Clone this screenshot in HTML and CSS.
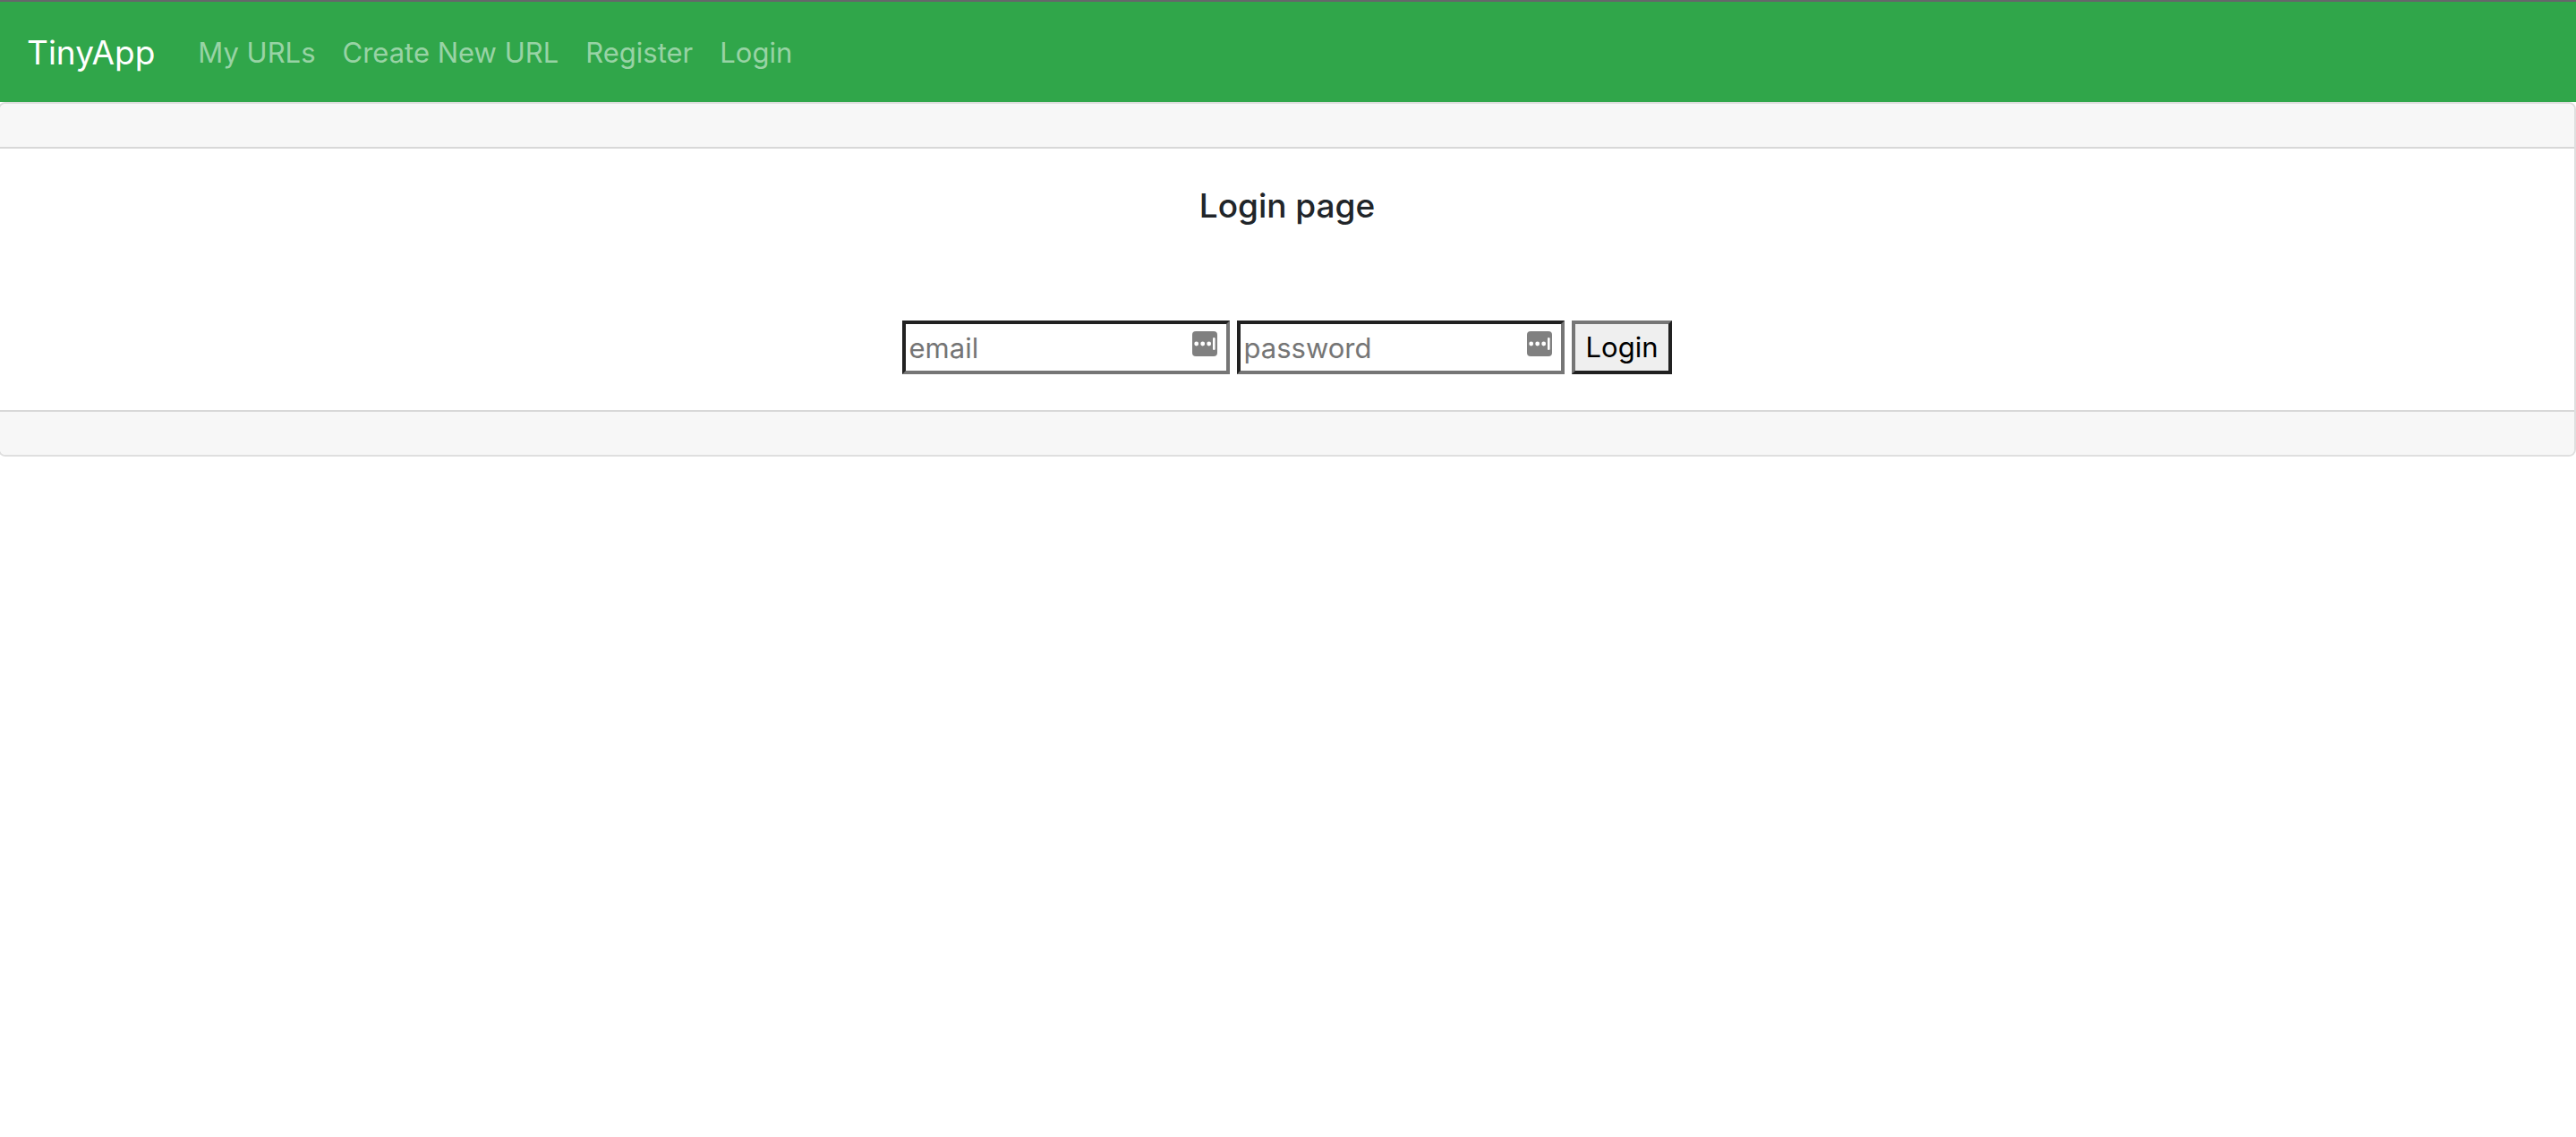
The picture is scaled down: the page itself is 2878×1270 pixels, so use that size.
FILE: index.html
```html
<!DOCTYPE html>
<html lang="en">
<head>
<meta charset="utf-8">
<meta name="viewport" content="width=device-width, initial-scale=1">
<title>TinyApp</title>
<link rel="stylesheet" href="styles.css">
</head>
<body>
<nav class="navbar">
  <a class="brand" href="#">TinyApp</a>
  <div class="nav-links">
    <a class="nav-link" href="#">My URLs</a>
    <a class="nav-link" href="#">Create New URL</a>
    <a class="nav-link" href="#">Register</a>
    <a class="nav-link" href="#">Login</a>
  </div>
</nav>
<main class="card">
  <div class="card-header"></div>
  <div class="card-body">
    <h1 class="card-title">Login page</h1>
    <form class="login-form">
      <div class="field">
        <input class="field-input" type="email" name="email" placeholder="email" aria-label="email">
        <svg class="field-icon" viewBox="0 0 28 28" aria-hidden="true">
          <rect width="28" height="28" rx="4" fill="#808080"/>
          <g fill="#fff"><circle cx="4.7" cy="14" r="2.4"/><circle cx="11.7" cy="14" r="2.4"/><circle cx="18.7" cy="14" r="2.4"/><rect x="23" y="7" width="2.6" height="14" rx="1.3"/></g>
        </svg>
      </div>
      <div class="field">
        <input class="field-input" type="password" name="password" placeholder="password" aria-label="password">
        <svg class="field-icon" viewBox="0 0 28 28" aria-hidden="true">
          <rect width="28" height="28" rx="4" fill="#808080"/>
          <g fill="#fff"><circle cx="4.7" cy="14" r="2.4"/><circle cx="11.7" cy="14" r="2.4"/><circle cx="18.7" cy="14" r="2.4"/><rect x="23" y="7" width="2.6" height="14" rx="1.3"/></g>
        </svg>
      </div>
      <button class="login-button" type="submit">Login</button>
    </form>
  </div>
  <div class="card-footer"></div>
</main>
</body>
</html>
```
FILE: styles.css
```css
* { box-sizing: border-box; }
body {
  margin: 0;
  background: #fff;
  color: #212529;
  font-family: Inter, "Liberation Sans", sans-serif;
  font-size: 31px;
  line-height: 48px;
}
.navbar {
  display: flex;
  align-items: center;
  gap: 48px;
  padding: 25px 30px 23px;
  border-top: 2px solid #66666b;
  background: #30a64a;
}
.brand {
  color: #fff;
  font-size: 37px;
  line-height: 64px;
  text-decoration: none;
}
.nav-links { display: flex; gap: 30px; }
.nav-link { color: #98d3a5; text-decoration: none; }
.card {
  margin-left: -2px;
  border: 2px solid #dfdfdf;
  border-radius: 8px;
  overflow: hidden;
}
.card-header, .card-footer { height: 50px; background: #f7f7f7; }
.card-header { border-bottom: 2px solid #d8d8d8; }
.card-footer { border-top: 2px solid #d8d8d8; }
.card-body { padding: 40px; text-align: center; }
.card-title {
  margin: 0 0 104px;
  font-size: 37px;
  font-weight: 500;
  line-height: 48px;
}
.login-form { display: flex; justify-content: center; gap: 8px; }
.field { position: relative; }
.field-input {
  display: block;
  width: 366px;
  height: 60px;
  padding: 4px;
  border: 4px solid;
  border-color: #212121 #767676 #767676 #212121;
  border-radius: 0;
  background: #fff;
  font: inherit;
}
.field-input::placeholder { color: #757575; opacity: 1; }
.field-icon { position: absolute; top: 12px; right: 14px; width: 28px; height: 28px; }
.login-button {
  height: 60px;
  padding: 0 12px;
  border: 4px solid;
  border-color: #767676 #212121 #212121 #767676;
  background: #efefef;
  color: #000;
  font: inherit;
}
```
